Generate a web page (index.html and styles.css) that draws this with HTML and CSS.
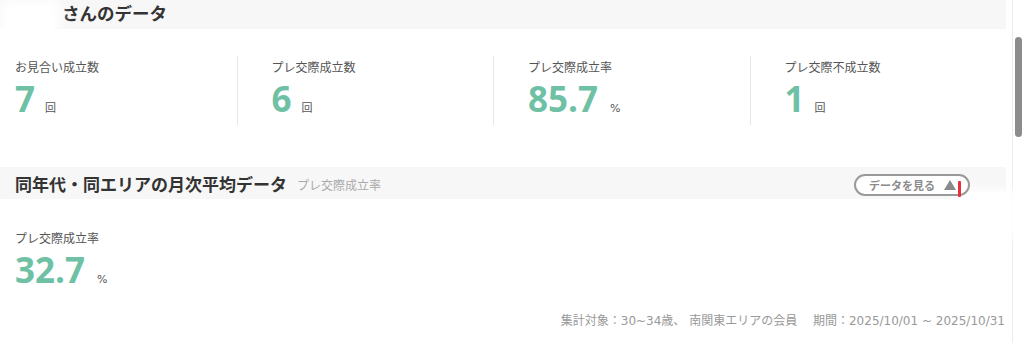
FILE: index.html
```html
<!DOCTYPE html>
<html lang="ja">
<head>
<meta charset="utf-8">
<title>データ</title>
<link rel="stylesheet" href="styles.css">
</head>
<body>
<div class="page">
  <main class="content">
    <section class="block">
      <header class="band band-top">
        <span class="redact"></span>
        <h2 class="band-title">さんのデータ</h2>
      </header>
      <div class="stats">
        <div class="stat">
          <div class="stat-label">お見合い成立数</div>
          <div class="stat-value"><span class="num">7</span><span class="unit">回</span></div>
        </div>
        <div class="stat">
          <div class="stat-label">プレ交際成立数</div>
          <div class="stat-value"><span class="num">6</span><span class="unit">回</span></div>
        </div>
        <div class="stat">
          <div class="stat-label">プレ交際成立率</div>
          <div class="stat-value"><span class="num">85.7</span><span class="unit pct">%</span></div>
        </div>
        <div class="stat">
          <div class="stat-label">プレ交際不成立数</div>
          <div class="stat-value"><span class="num">1</span><span class="unit">回</span></div>
        </div>
      </div>
    </section>
    <section class="block block-avg">
      <header class="band band-avg">
        <h2 class="band-title">同年代・同エリアの月次平均データ</h2>
        <span class="band-sub">プレ交際成立率</span>
        <span class="blob"></span>
        <button class="toggle" type="button">データを見る<svg class="tri" width="12" height="10" viewBox="0 0 12 10"><polygon points="6,0 12,10 0,10" fill="#8a8a8a"/></svg></button>
        <span class="mark"></span>
      </header>
      <div class="avg">
        <div class="stat-label">プレ交際成立率</div>
        <div class="stat-value"><span class="num">32.7</span><span class="unit pct">%</span></div>
      </div>
      <p class="note">集計対象：30~34歳、 南関東エリアの会員　 期間：2025/10/01 ~ 2025/10/31</p>
    </section>
  </main>
  <div class="scrollbar"><div class="thumb"></div></div>
</div>
</body>
</html>
```

FILE: styles.css
```css
* { box-sizing: border-box; }
html, body { margin: 0; padding: 0; background: #fff; }
body {
  font-family: "DejaVu Sans", "Noto Sans CJK JP", sans-serif;
  color: #444;
  overflow: hidden;
}
.page {
  display: flex;
  width: 1024px;
  height: 343px;
}
.content {
  width: 1006px;
  flex: none;
}
.scrollbar {
  margin-left: 6px;
  flex: 1;
  border-left: 1px solid #ececec;
  padding: 37px 2px 0 2px;
}
.thumb {
  width: 7px;
  height: 100px;
  background: #8c8c8c;
  border-radius: 4px;
}
.band {
  position: relative;
  display: flex;
  align-items: center;
  background: #f7f7f7;
}
.band-top {
  height: 29px;
  padding-left: 62px;
  padding-bottom: 3px;
}
.redact {
  position: absolute;
  left: 0;
  top: 0;
  width: 60px;
  height: 36px;
  background: #fff;
  filter: blur(6px);
}
.band-title {
  margin: 0;
  font-family: "Noto Sans CJK JP", sans-serif;
  font-size: 17px;
  font-weight: 700;
  color: #333;
  line-height: 1;
}
.band-top .band-title {
  font-size: 17.5px;
}
.stats {
  display: flex;
  margin-top: 27px;
  height: 69px;
}
.stat {
  width: 257px;
  padding-left: 34px;
  border-left: 1px solid #e6e6e6;
  padding-top: 2px;
}
.stat:first-child {
  width: 237px;
  padding-left: 15px;
  border-left: none;
}
.stat-label {
  font-family: "Noto Sans CJK JP", sans-serif;
  font-size: 12px;
  line-height: 18px;
  color: #555;
}
.stat-value {
  display: flex;
  align-items: baseline;
  margin-top: 4px;
}
.num {
  font-family: "Open Sans", sans-serif;
  font-weight: 700;
  font-size: 35px;
  line-height: 38px;
  color: #6fc1a5;
}
.unit {
  margin-left: 10px;
  font-family: "Noto Sans CJK JP", sans-serif;
  font-size: 11px;
  color: #555;
}
.unit.pct {
  font-family: "DejaVu Sans", sans-serif;
  font-size: 11px;
  margin-left: 12px;
}
.block-avg {
  margin-top: 42px;
}
.band-avg {
  height: 32px;
  padding-left: 15px;
}
.band-sub {
  margin-left: 10px;
  font-family: "Noto Sans CJK JP", sans-serif;
  font-size: 12px;
  color: #aaa;
  padding-top: 2px;
}
.toggle {
  position: relative;
  margin-left: auto;
  margin-right: 36px;
  margin-top: 4px;
  display: flex;
  align-items: center;
  height: 22px;
  padding: 0 12px 0 13px;
  border: 2px solid #9a9a9a;
  border-radius: 11px;
  background: #fff;
  font-family: "Noto Sans CJK JP", sans-serif;
  font-size: 11px;
  font-weight: 700;
  color: #8a8a8a;
  line-height: 1;
}
.tri {
  margin-left: 9px;
}
.mark {
  position: absolute;
  left: 958px;
  top: 14px;
  width: 3px;
  height: 16px;
  background: #e8303a;
  border-radius: 1px;
}
.blob {
  position: absolute;
  left: 952px;
  top: 22px;
  width: 64px;
  height: 52px;
  background: #fff;
  filter: blur(4px);
}
.avg {
  padding-left: 15px;
  margin-top: 30px;
}
.note {
  margin: 22px 0 0;
  text-align: right;
  font-family: "DejaVu Sans", "Noto Sans CJK JP", sans-serif;
  font-size: 12px;
  color: #999;
  padding-right: 1px;
}
```
